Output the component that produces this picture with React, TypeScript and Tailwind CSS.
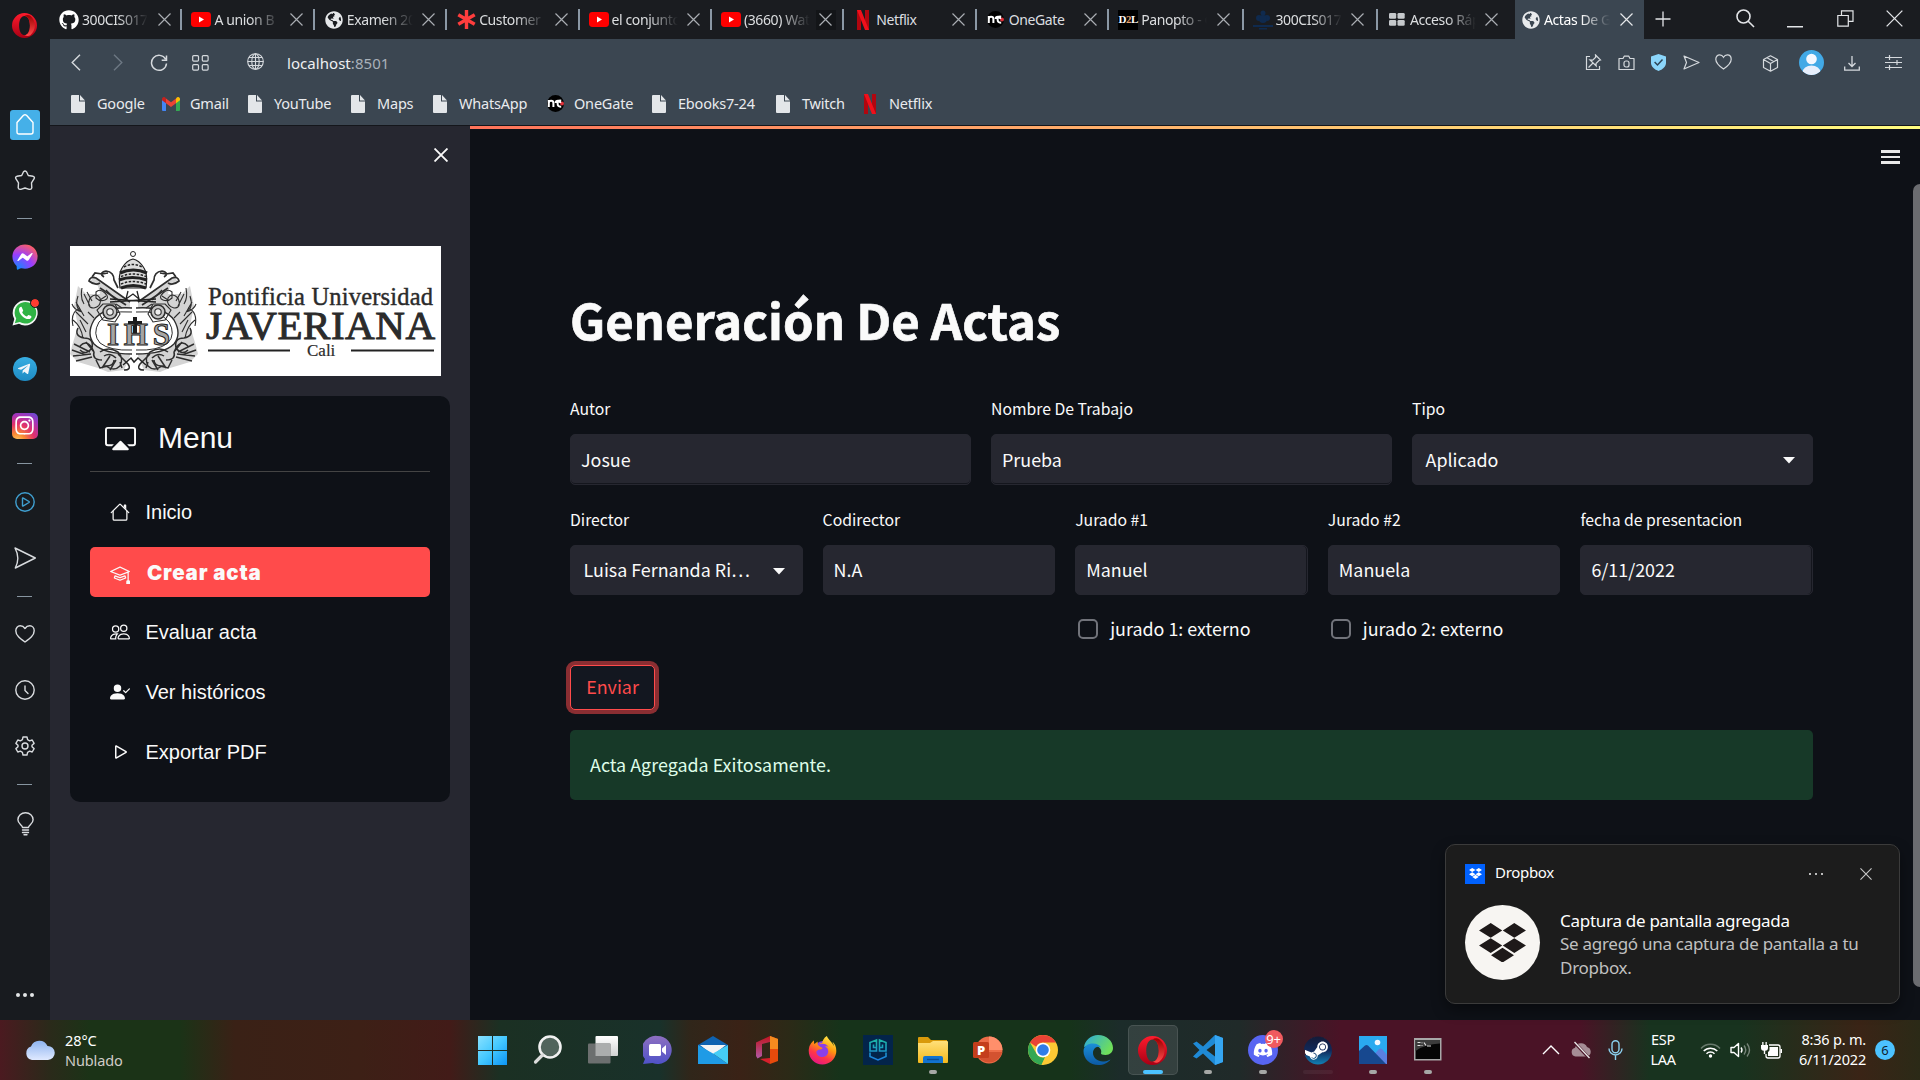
import React from "react";
import { BsCast, BsMortarboard, BsPersonCheckFill, BsPlay } from "react-icons/bs";
import {
  FaDiscord,
  FaFacebookMessenger,
  FaFirefoxBrowser,
  FaGithub,
  FaGlobeAmericas,
  FaInstagram,
  FaSteam,
  FaTelegramPlane,
} from "react-icons/fa";

const UI = "font-['Noto_Sans','Open_Sans',sans-serif]";
const ST = "font-['Noto_Sans_CJK_SC','Noto_Sans_CJK_JP',sans-serif]";

/* ---------- small glyphs ---------- */

function Cross({ size = 13, color = "#a9adb2", w = 1.2 }: { size?: number; color?: string; w?: number }) {
  return (
    <svg width={size} height={size} viewBox="0 0 13 13" fill="none" stroke={color} strokeWidth={w}>
      <path d="M.5.5l12 12M12.5.5l-12 12" />
    </svg>
  );
}

function YouTube() {
  return (
    <svg width="20" height="15" viewBox="0 0 20 15">
      <rect width="20" height="15" rx="3.4" fill="#f00" />
      <path d="M8 4.4l5 3.1-5 3.1z" fill="#fff" />
    </svg>
  );
}

function Globe({ color = "#e6e8ea" }: { color?: string }) {
  return <FaGlobeAmericas size={18} color={color} />;
}

function NetflixN({ w = 12, h = 20 }: { w?: number; h?: number }) {
  return (
    <svg width={w} height={h} viewBox="0 0 12 20">
      <path d="M0 0h4v20H0zM8 0h4v20H8z" fill="#b1060f" />
      <path d="M0 0h4l8 20H8z" fill="#f0101b" />
    </svg>
  );
}

function OneGate() {
  return (
    <svg width="17" height="17" viewBox="0 0 17 17">
      <circle cx="8.500" cy="8.500" r="8.500" fill="#000" />
      <circle cx="15" cy="8.500" r="2" fill="#e0323c" />
      <path d="M1.800 12V5M1.800 8q0-2.300 2.300-2.300T6.400 8v4M8.700 8q0-2.300 2.300-2.300T13.300 8M14.200 5.700q-3.600-.6-3.600 2.900t3.600 3" fill="none" stroke="#fff" strokeWidth="2" />
    </svg>
  );
}

function FileIcon() {
  return (
    <svg width="14" height="18" viewBox="0 0 14 18" fill="#e3e6e9">
      <path d="M1 0h7v6.5h6V17a1 1 0 0 1-1 1H1a1 1 0 0 1-1-1V1a1 1 0 0 1 1-1z" />
      <path d="M9 0l5 5.500H9z" />
    </svg>
  );
}

function Gmail() {
  return (
    <svg width="18" height="14" viewBox="0 0 18 14">
      <path d="M0 2.500V13a1 1 0 0 0 1 1h3V5z" fill="#4285f4" />
      <path d="M18 2.500V13a1 1 0 0 1-1 1h-3V5z" fill="#34a853" />
      <path d="M14 1.500V6.200l4-3V2c0-1.700-1.900-2.600-3.200-1.600z" fill="#fbbc04" />
      <path d="M4 6.200V1.500l5 3.800 5-3.800v4.700L9 10z" fill="#ea4335" />
      <path d="M0 2v1.200l4 3V1.500L3.200.4C1.900-.6 0 .3 0 2z" fill="#c5221f" />
    </svg>
  );
}

/* ---------- browser tabs ---------- */

const tabs: { icon: React.ReactNode; label: string; fade?: boolean; dark?: boolean }[] = [
  { icon: <FaGithub size={20} color="#fff" />, label: "300CIS017", fade: true },
  { icon: <YouTube />, label: "A union B", fade: true },
  { icon: <Globe />, label: "Examen 20", fade: true },
  {
    icon: (
      <svg width="19" height="19" viewBox="0 0 19 19" stroke="#ff3d3d" strokeWidth="3.4">
        <path d="M9.500 0v19M1.300 4.700l16.400 9.600M17.700 4.700L1.300 14.300" />
      </svg>
    ),
    label: "Customer",
    fade: true,
  },
  { icon: <YouTube />, label: "el conjunto", fade: true },
  { icon: <YouTube />, label: "(3660) Wat", fade: true, dark: true },
  { icon: <NetflixN />, label: "Netflix" },
  { icon: <OneGate />, label: "OneGate" },
  {
    icon: (
      <div className="flex h-5 w-5 items-center justify-center bg-black font-['Liberation_Serif',serif] text-[11px] leading-none font-bold tracking-[-0.6px] text-white">
        D<span className="text-[#e8a26b]">2</span>L
      </div>
    ),
    label: "Panopto - C",
    fade: true,
  },
  {
    icon: (
      <svg width="20" height="20" viewBox="0 0 20 20" fill="#0f2a4e">
        <circle cx="10" cy="3" r="2.500" />
        <circle cx="6" cy="8" r="3" />
        <circle cx="14" cy="8" r="3" />
        <circle cx="10" cy="9" r="4" />
        <path d="M0 15h20v2H0zM6 18h8v1.500H6z" />
      </svg>
    ),
    label: "300CIS017",
    fade: true,
  },
  {
    icon: (
      <svg width="16" height="13" viewBox="0 0 16 13" fill="#c6c9cc">
        <rect width="7.200" height="5.800" rx="1.300" />
        <rect x="8.500" width="7.200" height="5.800" rx="1.300" />
        <rect y="7" width="7.200" height="5.800" rx="1.300" />
        <rect x="8.500" y="7" width="7.200" height="5.800" rx="1.300" />
      </svg>
    ),
    label: "Acceso Ráp",
    fade: true,
  },
];

function TabBody({ icon, label, fade, active }: { icon: React.ReactNode; label: string; fade?: boolean; active?: boolean }) {
  return (
    <>
      <div className="flex w-5 shrink-0 items-center justify-center">{icon}</div>
      <div
        className={`ml-[3px] w-[66px] shrink-0 overflow-hidden text-[14px] leading-5 tracking-[-0.4px] whitespace-nowrap ${
          active ? "text-white" : "text-[#dcdee0]"
        } ${fade ? "[mask-image:linear-gradient(90deg,#000_55%,transparent_100%)]" : ""}`}
      >
        {label}
      </div>
    </>
  );
}

function TabStrip() {
  return (
    <div className={`${UI} flex h-[39px] bg-[#1a1c20]`}>
      <div className="flex w-[1465px]">
        {tabs.map((t, i) => (
          <div key={i} className={`flex h-[39px] shrink-0 items-center pl-[9px] ${i < 8 ? "w-[132.4px]" : "w-[134.4px]"}`}>
            <TabBody {...t} />
            <div className={`ml-[6px] flex size-5 items-center justify-center ${t.dark ? "bg-[#131518]" : ""}`}>
              <Cross />
            </div>
            {i < 10 && <div className="ml-auto h-[21px] w-[2px] bg-[#8b98a5]" />}
          </div>
        ))}
      </div>
      <div className="flex h-[39px] w-[129px] items-center bg-[#3b4651] pl-[6px]">
        <TabBody icon={<Globe color="#e8eaec" />} label="Actas De G" fade active />
        <div className="ml-[6px] flex size-5 items-center justify-center">
          <Cross color="#e6e8ea" />
        </div>
      </div>
      <div className="flex h-[37px] flex-1 items-center text-[#e3e5e8]">
        <svg className="ml-[11px]" width="16" height="16" viewBox="0 0 16 16" fill="none" stroke="currentColor" strokeWidth="1.300">
          <path d="M8 .5v15M.5 8h15" />
        </svg>
        <svg className="ml-[65px]" width="19" height="19" viewBox="0 0 19 19" fill="none" stroke="currentColor" strokeWidth="1.600">
          <circle cx="7.500" cy="7.500" r="6.500" />
          <path d="M12.200 12.200l5.800 5.800" />
        </svg>
        <svg className="mt-4 ml-[32px]" width="16" height="2" viewBox="0 0 16 2" fill="currentColor">
          <path d="M0 0h16v1.500H0z" />
        </svg>
        <svg className="ml-[34px]" width="17" height="17" viewBox="0 0 17 17" fill="none" stroke="currentColor" strokeWidth="1.200">
          <path d="M.8 5.500h10.500v10.700H.8zM4.500 5.500V.8H16v10.500h-4.700" />
        </svg>
        <div className="ml-[32px]">
          <Cross size={17} color="#e3e5e8" w={1} />
        </div>
      </div>
    </div>
  );
}

/* ---------- address bar ---------- */

function AddressBar() {
  return (
    <div className={`${UI} flex h-[47px] items-center text-[#d5d9dd]`}>
      <svg className="ml-[21px]" width="10" height="17" viewBox="0 0 10 17" fill="none" stroke="#d5d9dd" strokeWidth="1.400">
        <path d="M9 .8L1.200 8.500 9 16.200" />
      </svg>
      <svg className="ml-[32px]" width="10" height="17" viewBox="0 0 10 17" fill="none" stroke="#6d7883" strokeWidth="1.400">
        <path d="M1 .8l7.800 7.700L1 16.200" />
      </svg>
      <svg className="ml-[27px]" width="18" height="18" viewBox="0 0 18 18" fill="none" stroke="currentColor" strokeWidth="1.500">
        <path d="M15.600 5.200A7.500 7.500 0 1 0 16.500 9.500M16.500 1.500v4.800h-4.800" />
      </svg>
      <svg className="ml-[24px]" width="17" height="16" viewBox="0 0 17 16" fill="none" stroke="currentColor" strokeWidth="1.200">
        <rect x=".7" y=".7" width="5.800" height="5.400" rx="1" />
        <rect x="10.300" y=".7" width="5.800" height="5.400" rx="1" />
        <rect x=".7" y="9.700" width="5.800" height="5.400" rx="1" />
        <rect x="10.300" y="9.700" width="5.800" height="5.400" rx="1" />
      </svg>
      <svg className="mb-[2px] ml-[38px]" width="17" height="17" viewBox="0 0 17 17" fill="none" stroke="currentColor" strokeWidth="1.100">
        <circle cx="8.500" cy="8.500" r="7.800" />
        <ellipse cx="8.500" cy="8.500" rx="3.700" ry="7.800" />
        <path d="M8.500.7v15.600M.7 8.500h15.600M2 4.500h13M2 12.500h13" />
      </svg>
      <div className="ml-[23px] text-[15px] leading-5 tracking-[0.05px] text-[#eef0f2]">
        localhost<span className="text-[#a9b1b9]">:8501</span>
      </div>
      <div className="ml-auto flex items-center">
        <svg width="17" height="17" viewBox="0 0 17 17" fill="none" stroke="currentColor" strokeWidth="1.200">
          <path d="M5 2.500H1.500v13h13V12M10.500 1l5 5-1.500.5-3 3 .2 2.500L5 6l2.700.2 3-3zM8 9l-4.500 4.500" />
        </svg>
        <svg className="ml-4" width="17" height="16" viewBox="0 0 17 16" fill="none" stroke="currentColor" strokeWidth="1.200">
          <path d="M1 3.500h4l1.200-2.300h4.600L12 3.500h4v11H1z" strokeLinejoin="round" />
          <rect x="6" y="6" width="5" height="6" rx="2" />
        </svg>
        <svg className="ml-4" width="15" height="17" viewBox="0 0 15 17">
          <path d="M7.500 0L15 2.600v6.200c0 4-3.500 6.800-7.500 8.200C3.500 15.600 0 12.800 0 8.800V2.600z" fill="#8bd6fb" />
          <path d="M3.600 8l2.900 3 5-5.500" fill="none" stroke="#2d4456" strokeWidth="1.500" />
        </svg>
        <svg className="ml-[17px]" width="17" height="15" viewBox="0 0 17 15" fill="none" stroke="currentColor" strokeWidth="1.200">
          <path d="M1 1l15 6.500L1 14l2.500-6.500z" strokeLinejoin="round" />
        </svg>
        <svg className="mb-[2px] ml-[15px]" width="17" height="16" viewBox="0 0 17 16" fill="none" stroke="currentColor" strokeWidth="1.200">
          <path d="M8.500 15C4 12 .8 9 .8 5.300.8 2.500 2.600.8 4.700.8c1.700 0 3 1 3.800 2.400C9.300 1.800 10.600.8 12.300.8c2.100 0 3.900 1.700 3.900 4.500 0 3.700-3.200 6.700-7.700 9.700z" />
        </svg>
        <svg className="mt-[2px] ml-[30px]" width="17" height="17" viewBox="0 0 17 17" fill="none" stroke="currentColor" strokeWidth="1.200" strokeLinejoin="round">
          <path d="M8.500.8l7 3.700v8l-7 3.700-7-3.700v-8zM1.500 4.500l7 4 7-4M8.500 8.500v7.700M5 2.700l7 4" />
        </svg>
        <svg className="ml-[20px]" width="25" height="25" viewBox="0 0 25 25">
          <defs>
            <clipPath id="avatar">
              <circle cx="12.500" cy="12.500" r="12.500" />
            </clipPath>
          </defs>
          <g clipPath="url(#avatar)">
            <path d="M0 0h25v25H0z" fill="#42a9e6" />
            <circle cx="12.500" cy="9" r="5.300" fill="#f5f8ff" />
            <ellipse cx="12.500" cy="22.500" rx="9" ry="7" fill="#e8effc" />
          </g>
        </svg>
        <svg className="mt-[2px] ml-[20px]" width="16" height="15" viewBox="0 0 16 15" fill="none" stroke="currentColor" strokeWidth="1.300">
          <path d="M8 0v10.500M4.500 7L8 10.500 11.500 7M.7 10.500v3.700h14.600v-3.700" />
        </svg>
        <svg className="mr-[18px] ml-[25px]" width="17" height="15" viewBox="0 0 17 15" fill="none" stroke="currentColor" strokeWidth="1.200">
          <path d="M0 2.500h17M0 7.500h17M0 12.500h17M4.500 0v5M12 5v5M4.500 10v5" />
        </svg>
      </div>
    </div>
  );
}

function Bookmarks() {
  return (
    <div className={`${UI} flex h-[37px] items-center pb-[2px] pl-[18px] text-[14.5px] tracking-[-0.2px] text-[#e9ebee]`}>
      <Bookmark w="w-[93px]" icon={<FileIcon />} label="Google" />
      <Bookmark w="w-[84px]" icon={<Gmail />} label="Gmail" />
      <Bookmark w="w-[103px]" icon={<FileIcon />} label="YouTube" />
      <Bookmark w="w-[82px]" icon={<FileIcon />} label="Maps" />
      <Bookmark w="w-[115px]" icon={<FileIcon />} label="WhatsApp" />
      <Bookmark w="w-[104px]" icon={<OneGate />} label="OneGate" />
      <Bookmark w="w-[124px]" icon={<FileIcon />} label="Ebooks7-24" />
      <Bookmark w="w-[87px]" icon={<FileIcon />} label="Twitch" />
      <Bookmark w="w-[100px]" icon={<NetflixN />} label="Netflix" />
    </div>
  );
}

function Bookmark({ w, icon, label }: { w: string; icon: React.ReactNode; label: string }) {
  return (
    <div className={`flex items-center gap-[9px] whitespace-nowrap ${w}`}>
      <div className="flex w-5 shrink-0 justify-center">{icon}</div>
      {label}
    </div>
  );
}

/* ---------- Opera side rail ---------- */

function OperaLogo({ size }: { size: number }) {
  return (
    <svg width={size} height={size} viewBox="0 0 30 30">
      <defs>
        <linearGradient id="opA" x1="0" y1="0" x2="0" y2="1">
          <stop offset="0" stopColor="#ff1b2d" />
          <stop offset="1" stopColor="#a70014" />
        </linearGradient>
        <linearGradient id="opB" x1="0" y1="0" x2="0" y2="1">
          <stop offset="0" stopColor="#9c0000" />
          <stop offset="1" stopColor="#ff4b4b" />
        </linearGradient>
      </defs>
      <path fillRule="evenodd" d="M15 0a15 15 0 1 0 0 30 15 15 0 0 0 0-30zm0 3.500c4.200 0 6.500 5.300 6.500 11.500S19.200 26.500 15 26.500 8.500 21.200 8.500 15 10.800 3.500 15 3.500z" fill="url(#opA)" />
      <path d="M15 3.500c2-1.300 5-1.500 7-.1A15 15 0 0 1 22 26.600c-2 1.400-5 1.200-7-.1 4.200 0 6.500-5.300 6.500-11.500S19.200 3.500 15 3.500z" fill="url(#opB)" />
    </svg>
  );
}

const Cell = ({ children }: { children: React.ReactNode }) => (
  <div className="flex h-[56.2px] shrink-0 items-center justify-center">{children}</div>
);
const Dash = () => (
  <div className="flex h-5 shrink-0 items-center justify-center">
    <div className="h-px w-[15px] bg-[#8795a0]" />
  </div>
);
const Line = ({ d, w = 20, h = 20, color = "#d9dcdf", children }: { d?: string; w?: number; h?: number; color?: string; children?: React.ReactNode }) => (
  <svg width={w} height={h} viewBox={`0 0 ${w} ${h}`} fill="none" stroke={color} strokeWidth="1.400" strokeLinejoin="round" strokeLinecap="round">
    {d && <path d={d} />}
    {children}
  </svg>
);

function SideRail() {
  return (
    <div className="flex w-[50px] shrink-0 flex-col bg-[#181b1f] pr-px">
      <div className="flex h-[96.500px] justify-center pt-[13px]">
        <OperaLogo size={25} />
      </div>
      <Cell>
        <div className="ml-px flex size-[30px] items-center justify-center rounded-[3px] bg-[#45b0e8]">
          <Line w={18} h={21} color="#fff" d="M1 8.500L7.500 1.300q1.500-1.100 3 0L17 8.500V18q0 2-2 2H3q-2 0-2-2z" />
        </div>
      </Cell>
      <Cell>
        <Line w={22} h={21} d="M9.500 1.700q1.500-1.300 3 0l1.800 3.800 4.800.8q2 .8.900 2.500l-2.500 4 .3 5q-.5 2-2.600 1.500L11 18l-4.200 1.300q-2.100.5-2.600-1.500l.3-5-2.500-4Q.9 7.100 2.900 6.300l4.800-.8z" />
      </Cell>
      <Dash />
      <Cell>
        <svg width="0" height="0">
          <defs>
            <radialGradient id="msg" cx=".2" cy="1" r="1.100">
              <stop offset="0" stopColor="#0a8dff" />
              <stop offset=".55" stopColor="#9a3dff" />
              <stop offset="1" stopColor="#ff6060" />
            </radialGradient>
            <linearGradient id="ff" x1="0.800" y1="0" x2=".3" y2="1">
              <stop offset="0" stopColor="#fff44f" />
              <stop offset=".4" stopColor="#ff980e" />
              <stop offset=".7" stopColor="#ff3647" />
              <stop offset="1" stopColor="#e31587" />
            </linearGradient>
            <linearGradient id="steam" x1="0" y1="0" x2="0" y2="1">
              <stop offset="0" stopColor="#141b38" />
              <stop offset=".5" stopColor="#10295a" />
              <stop offset="1" stopColor="#1180b5" />
            </linearGradient>
          </defs>
        </svg>
        <div className="flex size-[26px] items-center justify-center rounded-full bg-[radial-gradient(circle,#fff_55%,transparent_56%)]">
          <FaFacebookMessenger size={26} fill="url(#msg)" />
        </div>
      </Cell>
      <Cell>
        <div className="relative">
          <svg width="26" height="26" viewBox="0 0 26 26">
            <path d="M.5 25.500l1.800-6.400A12.500 12.500 0 1 1 7 23.800z" fill="#f4f6f5" />
            <path d="M2.800 23.200l1.400-4.800A10.800 10.800 0 1 1 7.800 22z" fill="#2fb344" />
            <path d="M9.600 7c-.6-.7-2.600.4-2.600 2.400 0 4.500 5 9.600 9.400 9.700 2 0 3.300-1.500 3-2.700-.1-.4-2.500-1.600-3-1.500-.6.100-1 1.500-1.600 1.500-1.300-.2-4.300-2.700-4.600-4.200 0-.5 1.100-1.200 1-1.800z" fill="#fff" />
          </svg>
          <div className="absolute -top-px -right-px size-2 rounded-full bg-[#ff3b30] outline outline-1 outline-[#181b1f]" />
        </div>
      </Cell>
      <Cell>
        <div className="flex size-6 items-center justify-center rounded-full bg-gradient-to-b from-[#37aee2] to-[#1e8bc3]">
          <FaTelegramPlane size={14} color="#f2f6fa" className="mr-[2px]" />
        </div>
      </Cell>
      <Cell>
        <div className="flex size-[26px] items-center justify-center rounded-[5px] bg-[radial-gradient(circle_at_20%_110%,#ffd36b_0%,#fb8d33_22%,#e1306c_50%,#a634b8_75%,#5851db_100%)]">
          <FaInstagram size={21} color="#fff" />
        </div>
      </Cell>
      <Dash />
      <Cell>
        <Line color="#3f9fd0" d="M7.500 6.500q0-.8.800-.4l5.700 3.400q.6.500 0 1l-5.700 3.400q-.8.400-.8-.4z">
          <circle cx="10" cy="10" r="9.200" />
        </Line>
      </Cell>
      <Cell>
        <Line w={22} h={22} d="M1 1l20.300 10L1.300 21Q6.500 11 1 1z" />
      </Cell>
      <Dash />
      <Cell>
        <Line w={20} h={18} d="M10 17C5 13.500.8 10.500.8 5.800.8 3 2.700.8 5.200.8 7.300.8 9 2 10 3.500 11 2 12.700.8 14.800.8c2.500 0 4.400 2.200 4.400 5C19.200 10.500 15 13.500 10 17z" />
      </Cell>
      <Cell>
        <Line d="M10 6v4.500l3 3">
          <circle cx="10" cy="10" r="9.200" />
        </Line>
      </Cell>
      <Cell>
        <Line d="M8 1h4l.6 2.700 2 1.100 2.600-.8 1.900 3.400L17 9.200v1.600l2.100 1.800-1.900 3.400-2.600-.8-2 1.100L12 19H8l-.6-2.700-2-1.100-2.600.8L.9 12.600 3 10.800V9.200L.9 7.400 2.800 4l2.600.8 2-1.100z">
          <circle cx="10" cy="10" r="3" />
        </Line>
      </Cell>
      <Dash />
      <Cell>
        <div className="mt-[3px] ml-px">
          <Line w={17} h={24} d="M5.500 15.500C5.500 13 .9 12 .9 7.800a7.600 7 0 0 1 15.200 0c0 4.200-4.600 5.200-4.600 7.700zM5.500 18h6M5.500 20.500h6M7 22.800h3" />
        </div>
      </Cell>
      <div className="mt-auto flex justify-center gap-[3px] pb-[23px]">
        <div className="size-1 rounded-full bg-[#e3e5e7]" />
        <div className="size-1 rounded-full bg-[#e3e5e7]" />
        <div className="size-1 rounded-full bg-[#e3e5e7]" />
      </div>
    </div>
  );
}

/* ---------- university logo ---------- */

function CrestHalf() {
  return (
    <g fill="none" stroke="#2e2e2e" strokeWidth="1.100">
      <path d="M60 56L24 30l-4 6 8 4 2 8-14 0-8-8-4 20 4 20-6 20-2 8 8 8 20 6 10 4 16-2 6-14z" fill="#d4d4d4" stroke="none" />
      <path d="M62 62Q34 60 24 74 16 88 24 98 34 108 62 108" fill="#fff" strokeWidth="1.400" />
      <path d="M62 66Q38 64 29 76 22 88 30 97 40 105 62 104" strokeWidth="1" />
      <path d="M60 56L26 32q-6-2-7 3 6 5 11 2M56 59L30 42M34 31q-6-4 2-6 8 1 8 9l4 8M22 31l3-4 7 1 6-1" strokeWidth="1.700" />
      <path d="M12 42q-2 10 2 16M8 50q-4 12 4 16-8-2-10-8M10 62q-10 4-7 18M14 48l6 12M17 46l5 9M6 56l8 14M3 74q8 6 10 18M6 66l12 12M10 74l6 12M20 52q6-6 10 0 2 8-6 10-8 0-4-10z" />
      <circle cx="40" cy="66" r="7" strokeWidth="1.600" fill="#c4c4c4" />
      <circle cx="40" cy="66" r="3.200" fill="#eee" />
      <path d="M33 58l-6 6 6 10 12 2 5-8-5-10zM26 46q4-4 9 1t0 7-9-2zM36 44l10 10M30 54l6-4M46 58l6 4M18 66l6 6" />
      <path d="M8 82q-4 8 6 10 10 0 8 10-6 8-12 2M2 104l14 5M4 98l16 8M3 110l18-2M6 115l16-4M10 100q8-8 14 6-2 8 8 8M16 96l8 10" strokeWidth="1.500" />
      <path d="M30 106q8-6 18 0 6 6 2 14-6 6-14 0 8 0 8-6M34 110q6-4 12 2M26 114l4 8 8-2M32 122l8-12M48 108l10 10q4 6-4 6M40 124l6-10M50 116l2 6" strokeWidth="1.500" />
    </g>
  );
}

function UniversityLogo() {
  return (
    <svg className="block h-[130px] w-[371px] bg-white" viewBox="0 0 371 130">
      <CrestHalf />
      <g transform="translate(128 0) scale(-1 1)">
        <CrestHalf />
      </g>
      <g fill="none" stroke="#222">
        <circle cx="63" cy="8" r="2.500" />
        <path d="M50 42q-2-14 2-20 5-8 11-9 6 1 11 9 4 6 2 20z" fill="#ddd" strokeWidth="1.200" />
        <path d="M50 27q13-6 27 0M49 34q13-5 28 0M51 42q12-5 25 0" strokeWidth="3.200" />
        <path d="M51 30.500q12-5 25 0M51 38q12-5 25 0M54 21q9-5 18 0" strokeWidth="1.500" strokeDasharray="2.500 1.500" />
        <path d="M58 45l-2 8 7-5 6 5-2-8M40 56l46-3M40 53l46 3" strokeWidth="1.300" />
        <path d="M53 119l8-7 3 4 4-4 8 7" strokeWidth="1.500" />
      </g>
      <path d="M63 71h4v4h5v4h-5v9h-4v-9h-5v-4h5z" fill="#1c1c1c" />
      <text x="37" y="99" fontFamily="Liberation Serif, serif" fontSize="31" fontWeight="700" fill="#a5a5a5" stroke="#222" strokeWidth="1" textLength="63">
        IHS
      </text>
      <g fontFamily="Liberation Serif, serif" fill="#2b2b2b">
        <text x="138" y="58.500" fontSize="24.500" textLength="225" stroke="#2b2b2b" strokeWidth=".4">
          Pontificia Universidad
        </text>
        <text x="136" y="93" fontSize="41" textLength="229" stroke="#2b2b2b" strokeWidth="1">
          JAVERIANA
        </text>
        <text x="237" y="109.500" fontSize="17" stroke="#2b2b2b" strokeWidth=".2">
          Cali
        </text>
      </g>
      <path d="M138 104.500h82M281 104.500h83" stroke="#222" strokeWidth="2" />
    </svg>
  );
}

/* ---------- Streamlit sidebar ---------- */

const House = () => (
  <svg width="20" height="20" viewBox="0 0 16 16" fill="currentColor">
    <path d="M2 13.500V7h1v6.500a.5.500 0 0 0 .5.500h9a.5.500 0 0 0 .5-.5V7h1v6.500a1.500 1.500 0 0 1-1.500 1.500h-9A1.500 1.500 0 0 1 2 13.500zm11-11V6l-2-2V2.500a.5.500 0 0 1 .5-.5h1a.5.500 0 0 1 .5.500z" />
    <path d="M7.293 1.500a1 1 0 0 1 1.414 0l6.647 6.646a.5.500 0 0 1-.708.708L8 2.207 1.354 8.854a.5.500 0 1 1-.708-.708L7.293 1.500z" />
  </svg>
);
const People = () => (
  <svg width="20" height="20" viewBox="0 0 16 16" fill="currentColor">
    <path d="M15 14s1 0 1-1-1-4-5-4-5 3-5 4 1 1 1 1h8zm-7.978-1A.261.261 0 0 1 7 12.996c.001-.264.167-1.030.760-1.720C8.312 10.629 9.282 10 11 10c1.717 0 2.687.630 3.240 1.276.593.690.758 1.457.760 1.720l-.008.002a.274.274 0 0 1-.014.002H7.022zM11 7a2 2 0 1 0 0-4 2 2 0 0 0 0 4zm3-2a3 3 0 1 1-6 0 3 3 0 0 1 6 0zM6.936 9.280a5.880 5.880 0 0 0-1.230-.247A7.350 7.350 0 0 0 5 9c-4 0-5 3-5 4 0 .667.333 1 1 1h4.216A2.238 2.238 0 0 1 5 13c0-1.010.377-2.042 1.090-2.904.243-.294.526-.569.846-.816zM4.920 10A5.493 5.493 0 0 0 4 13H1c0-.260.164-1.030.760-1.724.545-.636 1.492-1.256 3.160-1.275zM1.500 5.500a3 3 0 1 1 6 0 3 3 0 0 1-6 0zm3-2a2 2 0 1 0 0 4 2 2 0 0 0 0-4z" />
  </svg>
);

function MenuItem({ icon, label, active }: { icon: React.ReactNode; label: string; active?: boolean }) {
  return (
    <div className={`mb-[10px] flex h-[50px] items-center rounded-[5px] pl-5 ${active ? "bg-[#ff4b4b]" : ""}`}>
      <div className={active ? "mt-[3px] w-[37px]" : "w-9"}>{icon}</div>
      {active ? (
        <span className="mt-[2px] font-['Inter',sans-serif] text-[20.5px] font-black tracking-[0.8px]">{label}</span>
      ) : (
        <span className="-ml-[0.5px] text-xl">{label}</span>
      )}
    </div>
  );
}

function Sidebar() {
  return (
    <div className="flex w-[420px] shrink-0 flex-col bg-[#262730] px-5">
      <div className="flex h-[120px] justify-end pt-[22px] pr-[2px]">
        <Cross size={14} color="#fafafa" w={1.7} />
      </div>
      <UniversityLogo />
      <div className="mt-5 h-[406px] rounded-[10px] bg-[#0e1117] px-5 font-['Liberation_Sans',Arial,sans-serif] text-[#fafafa]">
        <div className="mb-[15px] flex h-[76px] items-center border-b border-[#444] pl-[15px]">
          <BsCast size={31} className="mt-[9px]" />
          <span className="mt-[9px] ml-[22px] text-[30px] leading-9">Menu</span>
        </div>
        <MenuItem icon={<House />} label="Inicio" />
        <MenuItem icon={<BsMortarboard size={20} />} label="Crear acta" active />
        <MenuItem icon={<People />} label="Evaluar acta" />
        <MenuItem icon={<BsPersonCheckFill size={20} />} label="Ver históricos" />
        <MenuItem icon={<BsPlay size={24} className="-ml-px" />} label="Exportar PDF" />
      </div>
    </div>
  );
}

/* ---------- form ---------- */

function Field({ label, value, select, edge = "", tall }: { label: string; value: string; select?: boolean; edge?: string; tall?: boolean }) {
  return (
    <div className="min-w-0 flex-1">
      <div className="h-[35px] text-[15.75px] leading-5 whitespace-nowrap">{label}</div>
      <div
        className={`flex items-center rounded-[5px] border border-[#262730] bg-[#262730] text-[17.9px] leading-6 whitespace-nowrap ${
          tall ? "h-[51px]" : "h-[50px]"
        } ${select ? "pr-[17px] pl-[12.5px]" : "pl-[10px]"} ${edge}`}
      >
        <span className="-mt-[2px]">{value}</span>
        {select && (
          <svg className="mt-[2px] ml-auto" width="12" height="7" viewBox="0 0 12 7" fill="#fafafa">
            <path d="M0 0h12L6 6.500z" />
          </svg>
        )}
      </div>
    </div>
  );
}

function Check({ label }: { label: string }) {
  return (
    <div className="min-w-0 flex-1">
      <div className="flex items-center pt-[3px] pl-[3px]">
        <div className="size-5 shrink-0 rounded-[5px] border-2 border-[#71737a]" />
        <span className="-mt-[2px] ml-3 text-[17.9px] leading-6 whitespace-nowrap">{label}</span>
      </div>
    </div>
  );
}

function Main() {
  const bottom = "shadow-[inset_0_-1px_0_#14161d]";
  const right = "shadow-[inset_-1px_0_0_#14161d]";
  return (
    <div className={`${ST} relative flex min-w-0 flex-1 flex-col bg-[#0e1117] text-[#fafafa]`}>
      <div className="h-[3px] bg-[linear-gradient(90deg,#ff735a,#fffd80)]" />
      <div className="flex h-[145px] flex-col items-end gap-[3px] pt-[21px] pr-5">
        <div className="h-[2.500px] w-[19px] bg-[#e8e8e8]" />
        <div className="h-[2.500px] w-[19px] bg-[#e8e8e8]" />
        <div className="h-[2.500px] w-[19px] bg-[#e8e8e8]" />
      </div>
      <div className="w-[1343px] pl-[100px]">
        <h1 className="h-[125px] pt-[12px] text-[49px] leading-[66px] font-bold whitespace-nowrap [-webkit-text-stroke:0.700px_#fafafa]">Generación De Actas</h1>
        <div className="flex h-[111px] gap-5">
          <Field tall label="Autor" value="Josue" edge={bottom} />
          <Field tall label="Nombre De Trabajo" value="Prueba" edge={bottom} />
          <Field tall label="Tipo" value="Aplicado" select />
        </div>
        <div className="flex h-[105px] gap-5">
          <Field label="Director" value="Luisa Fernanda Ri…" select />
          <Field label="Codirector" value="N.A" />
          <Field label="Jurado #1" value="Manuel" edge={right} />
          <Field label="Jurado #2" value="Manuela" />
          <Field label="fecha de presentacion" value="6/11/2022" edge={right} />
        </div>
        <div className="flex h-[30px] gap-5">
          <div className="flex-1" />
          <div className="flex-1" />
          <Check label="jurado 1: externo" />
          <Check label="jurado 2: externo" />
          <div className="flex-1" />
        </div>
        <div className="mt-5 flex h-[45px] w-[85px] items-center justify-center rounded-[5px] border border-[#ff4b4b] bg-[#131720] pb-[2px] text-[17.9px] text-[#ff4b4b] shadow-[0_0_0_4px_#8a2e32]">
          Enviar
        </div>
        <div className="mt-5 flex h-[70px] items-center rounded-[5px] bg-[#173928] pb-[2px] pl-5 text-[17.9px] text-[#dffde9]">Acta Agregada Exitosamente.</div>
      </div>
      <div className="absolute top-[58px] right-0 h-[803px] w-[7px] rounded-l-full bg-[#6b6c70]" />
    </div>
  );
}

/* ---------- Dropbox notification ---------- */

const Boxes = ({ w, color }: { w: number; color: string }) => (
  <svg width={w} height={w * 0.85} viewBox="0 0 47 40" fill={color}>
    <path d="M11.700 0l11.500 7.400-11.500 7.400L0 7.400zM35.300 0L47 7.400l-11.700 7.400-11.500-7.400zM11.700 15.200l11.500 7.400L11.700 30 0 22.600zM35.300 15.200L47 22.600 35.300 30l-11.500-7.400zM23.500 24.800L35 32.200 23.500 39.600 12 32.200z" />
  </svg>
);

function Notification() {
  return (
    <div className={`${UI} absolute top-[844px] left-[1445px] h-[160px] w-[455px] rounded-[10px] border border-[#3b3b3b] bg-[#1c1c1c] px-[19px] text-white shadow-[0_6px_14px_rgba(0,0,0,0.4)]`}>
      <div className="flex h-[57px] items-center">
        <div className="flex size-5 items-center justify-center bg-[#0061fe]">
          <Boxes w={13} color="#fff" />
        </div>
        <span className="-mt-[2px] ml-[10px] text-[15px] tracking-[-0.3px]">Dropbox</span>
        <div className="ml-auto flex gap-[4px]">
          <div className="size-[2px] bg-[#bbb]" />
          <div className="size-[2px] bg-[#bbb]" />
          <div className="size-[2px] bg-[#bbb]" />
        </div>
        <div className="mr-[8px] ml-[37px]">
          <Cross size={12} color="#c8c8c8" />
        </div>
      </div>
      <div className="mt-[3px] flex">
        <div className="flex size-[75px] items-center justify-center rounded-full bg-[#f7f5f2]">
          <Boxes w={47} color="#1e1919" />
        </div>
        <div className="mt-[4px] ml-5 text-[17px] leading-[23.300px] tracking-[-0.28px] whitespace-nowrap">
          <div>Captura de pantalla agregada</div>
          <div className="text-[#c0c0c0]">Se agregó una captura de pantalla a tu</div>
          <div className="text-[#c0c0c0]">Dropbox.</div>
        </div>
      </div>
    </div>
  );
}

/* ---------- taskbar ---------- */

const Grad = ({ id, a, b, x2 = 0, y2 = 1 }: { id: string; a: string; b: string; x2?: number; y2?: number }) => (
  <linearGradient id={id} x1="0" y1="0" x2={x2} y2={y2}>
    <stop offset="0" stopColor={a} />
    <stop offset="1" stopColor={b} />
  </linearGradient>
);

const I = ({ children }: { children: React.ReactNode }) => (
  <svg width="30" height="30" viewBox="0 0 30 30">
    {children}
  </svg>
);

const apps: { el: React.ReactNode; mark?: "on" | "active" | "faint"; badge?: string }[] = [
  {
    el: (
      <I>
        <defs>
          <linearGradient id="win" x1="0" y1="0" x2="30" y2="30" gradientUnits="userSpaceOnUse">
            <stop offset="0" stopColor="#8be2ff" />
            <stop offset=".5" stopColor="#44c8ff" />
            <stop offset="1" stopColor="#0a93f5" />
          </linearGradient>
        </defs>
        <path d="M0 1h14v14H0zM15 1h14v14H15zM0 16h14v14H0zM15 16h14v14H15z" fill="url(#win)" />
      </I>
    ),
  },
  {
    el: (
      <I>
        <circle cx="17" cy="12" r="10.500" fill="#51645c" stroke="#f1f1f1" strokeWidth="2.600" />
        <path d="M9.500 20L2.500 27" stroke="#dcdcdc" strokeWidth="3.200" strokeLinecap="round" />
      </I>
    ),
  },
  {
    el: (
      <I>
        <defs>
          <Grad id="tv" a="#ffffff" b="#cfd1d1" />
        </defs>
        <rect x="7.500" y="1" width="22.500" height="20" rx="1" fill="url(#tv)" />
        <rect y="8.500" width="22.500" height="20" rx="1" fill="#6c6f6f" />
        <path d="M7.500 8.500h15V21h-15z" fill="#abadad" />
      </I>
    ),
  },
  {
    el: (
      <I>
        <defs>
          <Grad id="chat" a="#8d6fc0" b="#4f52c8" />
        </defs>
        <path d="M14.500 1a14 14 0 1 1-5 27L0 29l2-5A14 14 0 0 1 14.500 1z" fill="url(#chat)" />
        <rect x="6" y="9" width="12" height="12" rx="1.500" fill="#fff" />
        <path d="M19 13.500l4-3.500v10l-4-3.500z" fill="#fff" />
      </I>
    ),
  },
  {
    el: (
      <I>
        <path d="M0 10L15 1l15 9v6H0z" fill="#0f62b0" />
        <path d="M2 10h26L15 20z" fill="#f4f4f4" />
        <path d="M0 10v19h30L15 18.500z" fill="#1f9be6" />
        <path d="M30 10v19L15 18.500z" fill="#45cdf6" />
      </I>
    ),
  },
  {
    el: (
      <I>
        <defs>
          <Grad id="off" a="#c0141e" b="#b05aa6" />
        </defs>
        <path d="M17 1v6l-8 2v12l-4.500 2.500L3 21V7.500z" fill="url(#off)" />
        <path d="M17 1l8 3v22l-8 3z" fill="#e84a0c" />
        <path d="M17 1l8 3v10h-8z" fill="#f58a1f" />
        <path d="M7 24l10-1v6z" fill="#d6202c" />
      </I>
    ),
  },
  {
    el: (
      <div className="relative flex size-[30px] items-center justify-center">
        <div className="absolute size-[18px] rounded-full bg-[#8b3fe8]" />
        <FaFirefoxBrowser size={29} fill="url(#ff)" className="relative" />
      </div>
    ),
  },
  {
    el: (
      <I>
        <path d="M0 0h30v30H0z" fill="#03244a" />
        <defs>
          <Grad id="pg" a="#1db5a6" b="#1b7fe0" />
        </defs>
        <path d="M13.500 5L7 7.500V16h6.500zM16.500 5L23 7.500V16h-6.500zM7 17.500v4l8 3.500 8-3.500v-4M10.500 9.500v3h3M19.500 9.500v3h-3" fill="none" stroke="url(#pg)" strokeWidth="1.600" />
      </I>
    ),
  },
  {
    el: (
      <I>
        <defs>
          <Grad id="fold" a="#ffe07a" b="#f5b91c" />
        </defs>
        <path d="M0 3q0-1 1-1h9l3 3h16v8H0z" fill="#d99a0b" />
        <path d="M0 8h12l3-2h14q1 0 1 1v20q0 1-1 1H1q-1 0-1-1z" fill="url(#fold)" />
        <path d="M5 28v-5q0-2 2-2h16q2 0 2 2v5z" fill="#1273cf" />
        <path d="M9 24.500h12" stroke="#0c4d94" strokeWidth="1.400" />
      </I>
    ),
    mark: "on",
  },
  {
    el: (
      <I>
        <circle cx="16" cy="15" r="13.500" fill="#ed6c47" />
        <path d="M16 1.500A13.500 13.500 0 0 1 29.500 15H16z" fill="#ff8f6b" />
        <path d="M3 17h26.300A13.500 13.500 0 0 1 3 17z" fill="#d35230" />
        <rect y="7" width="16" height="16" rx="1.500" fill="#c43e1c" />
        <text x="4" y="20" fontFamily="Open Sans, sans-serif" fontSize="13" fontWeight="800" fill="#fff">
          P
        </text>
      </I>
    ),
  },
  {
    el: (
      <I>
        <circle cx="15" cy="15" r="15" fill="#fcc934" />
        <path d="M15 0a15 15 0 0 1 13 7.500H15a7.500 7.500 0 0 0-6.800 4.200L2 7.500A15 15 0 0 1 15 0z" fill="#ea4335" />
        <path d="M2 7.500l6.500 11.250A7.500 7.500 0 0 0 17 22.200L13.500 29.900A15 15 0 0 1 2 7.500z" fill="#34a853" />
        <path d="M21.500 18.750L15 30h-1.500l4-8z" fill="#fcc934" />
        <circle cx="15" cy="15" r="7.300" fill="#fff" />
        <circle cx="15" cy="15" r="5.800" fill="#2f7ce8" />
      </I>
    ),
  },
  {
    el: (
      <I>
        <defs>
          <Grad id="edA" a="#2aa8e0" b="#6fdf5a" x2={1} y2={0.5} />
          <Grad id="edB" a="#1b8fd8" b="#0c59a4" />
        </defs>
        <path d="M1 12C2 5 8 0 15 0c8.500 0 15 6 15 13 0 4-3 7-7.500 7-3 0-5-1-4.500-2 1-2-.5-7-6-7-5 0-9 0-11 1z" fill="url(#edA)" />
        <path d="M.5 16C.5 11 5 8.500 10 8.500c4 0 7 2 8 4-4-2-8 1-8 5.500 0 5 5 9 11 8.500 3-.3 5-1.200 6.500-2C25 28 20.500 30 15.500 30 7 30 .5 24 .5 16z" fill="url(#edB)" />
      </I>
    ),
  },
  { el: <OperaLogo size={29} />, mark: "active" },
  {
    el: (
      <I>
        <path d="M22 0l8 3v24l-8 3L10 18.500 3.500 23.500 0 21.500 6.500 15 0 8.500l3.500-2L10 11.500zM22 8.500L13.500 15l8.500 6.500z" fill="#1f8ad6" fillRule="evenodd" />
        <path d="M22 0l8 3v24l-8 3z" fill="#35a6f2" />
      </I>
    ),
    mark: "on",
  },
  {
    el: (
      <div className="flex size-[30px] items-center justify-center rounded-full bg-[#5865f2]">
        <FaDiscord size={20} color="#fff" />
      </div>
    ),
    mark: "on",
    badge: "9+",
  },
  {
    el: (
      <div className="flex size-[28px] items-center justify-center rounded-full bg-[radial-gradient(circle,#fff_65%,transparent_67%)]">
        <FaSteam size={29} fill="url(#steam)" />
      </div>
    ),
    mark: "faint",
  },
  {
    el: (
      <I>
        <path d="M1 1h28v28H1z" fill="#2aaaf0" />
        <circle cx="19.500" cy="7.500" r="2.800" fill="#f3f8ff" />
        <path d="M14 22l7-8q1.500-1.200 3 0l5 6v9H14z" fill="#5a7fe0" />
        <path d="M1 16l6-5.500q1.500-1 3 0L28 29H1z" fill="#17488f" />
      </I>
    ),
    mark: "on",
  },
  {
    el: (
      <I>
        <path d="M1 3h27.500v22.500H1z" fill="#a8a8a8" />
        <path d="M2.500 5h24.500v19H2.500z" fill="#050505" />
        <path d="M2.500 5H27v3.500Q12 9 2.500 16z" fill="#3c3c3c" />
        <path d="M4.500 7.500h3M4.500 10.500h3M9 7.500v.8M9 10v.8M11 7.500l2 3M14 11h4" stroke="#e0e0e0" strokeWidth="1.200" />
      </I>
    ),
    mark: "on",
  },
];

function Taskbar() {
  return (
    <div
      className={`${UI} flex h-[60px] bg-[linear-gradient(90deg,#4b1a20_0px,#2a2a1a_50px,#1b3317_90px,#1b3317_180px,#3a2116_235px,#3d2016_360px,#421b18_450px,#1b3023_500px,#19312a_660px,#30261a_690px,#3a2216_740px,#2b2a17_790px,#16331a_840px,#16331a_1070px,#1c2c2a_1120px,#202a29_1240px,#4a1326_1340px,#4a1326_1580px,#18331f_1650px,#18331f_1740px,#3a2416_1860px,#2b2a17_1920px)] text-white`}
    >
      <div className="flex w-[465px] pl-[25px]">
        <svg className="mt-[18px]" width="31" height="23" viewBox="0 0 31 23">
          <defs>
            <Grad id="cloud" a="#8fb4f0" b="#dfe9ff" />
          </defs>
          <path d="M7 22a7 7 0 0 1-1-13.500A9 9 0 0 1 22.500 8 7 7 0 0 1 23 22z" fill="url(#cloud)" />
        </svg>
        <div className="mt-[10px] ml-[9px] text-[14.500px] leading-5 tracking-[-0.1px]">
          <div>28°C</div>
          <div className="text-[#d0ccc8]">Nublado</div>
        </div>
      </div>
      {apps.map((a, i) => (
        <div key={i} className="flex w-[55px] flex-col items-center pt-[5px]">
          <div className={`relative flex h-[50px] w-[50px] flex-col items-center rounded-[5px] pt-[10px] ${a.mark === "active" ? "border border-white/10 bg-white/10 pt-[9px]" : ""}`}>
            <div className="flex h-[30px] items-center">{a.el}</div>
            {a.badge && (
              <div className="absolute top-[5px] right-[5px] flex size-[18px] items-center justify-center rounded-full bg-[#f05a5f] text-[13px] leading-none tracking-[-0.3px]">
                {a.badge}
              </div>
            )}
            {a.mark === "on" && <div className="mt-[5px] h-1 w-2 rounded-full bg-[#a6a8a6]" />}
            {a.mark === "active" && <div className="mt-[5px] h-1 w-5 shrink-0 rounded-full bg-[#4cc2ff]" />}
            {a.mark === "faint" && <div className="mt-[5px] h-1 w-[30px] rounded-full bg-white/5" />}
          </div>
        </div>
      ))}
      <div className="flex flex-1 items-center">
        <svg className="ml-[87px]" width="18" height="10" viewBox="0 0 18 10" fill="none" stroke="#fff" strokeWidth="1.400">
          <path d="M1 9l8-8 8 8" />
        </svg>
        <svg className="ml-[11px]" width="21" height="18" viewBox="0 0 21 18">
          <path d="M4.500 15.500a4.500 4.500 0 0 1-.5-8.800A6.500 6.500 0 0 1 16 6a5 5 0 0 1 .5 9.500z" fill="#a58d95" />
          <path d="M3 1l15 16" stroke="#4a1326" strokeWidth="3" />
          <path d="M3.500 1l15 16" stroke="#e8e8e8" strokeWidth="1.300" />
        </svg>
        <svg className="ml-[16px]" width="15" height="20" viewBox="0 0 15 20" fill="none" stroke="#8bd0ee" strokeWidth="1.400">
          <rect x="4" y=".8" width="7" height="12" rx="3.500" />
          <path d="M1 8.500a6.500 6.500 0 0 0 13 0M7.500 15.500V20" />
        </svg>
        <div className="-mt-[2px] ml-[19px] w-[42px] text-center text-[14.500px] leading-5 tracking-[-0.3px]">
          ESP
          <br />
          LAA
        </div>
        <svg className="ml-[16px]" width="21" height="16" viewBox="0 0 21 16" fill="none" stroke="#fff" strokeWidth="1.500">
          <path d="M1 6.500a13 13 0 0 1 19 0" stroke="#fff" strokeOpacity=".35" />
          <path d="M3.700 9a9.500 9.500 0 0 1 13.600 0M6.500 11.700a5.700 5.700 0 0 1 8 0" />
          <circle cx="10.500" cy="14" r="1.700" fill="#fff" stroke="none" />
        </svg>
        <svg className="ml-[9px]" width="21" height="16" viewBox="0 0 21 16" fill="none" stroke="#fff" strokeWidth="1.400">
          <path d="M1 5.500h3L8.500 1.500v13L4 10.500H1z" strokeLinejoin="round" />
          <path d="M11 5.500q2 2.500 0 5" />
          <path d="M14 3.500q3.500 4.500 0 9M17 1.500q5 6.500 0 13" strokeOpacity=".4" />
        </svg>
        <svg className="ml-[10px]" width="21" height="17" viewBox="0 0 21 17">
          <path d="M8 3h9q2 0 2 2v9q0 2-2 2H7q-2 0-2-2v-2" fill="none" stroke="#fff" strokeWidth="1.300" />
          <path d="M8.500 5h8.500v9H7v-4q1.500-1 1.500-2zM19.500 7H21v4h-1.500z" fill="#fff" />
          <path d="M0 3h7v3q0 2.500-2.800 2.700V12H2.800V8.700Q0 8.500 0 6zM1.200 0h1.300v3H1.200zM4.500 0h1.300v3H4.500z" fill="#fff" />
        </svg>
        <div className="-mt-[2px] ml-auto text-right text-[14.500px] leading-5 tracking-[-0.2px] whitespace-nowrap">
          8:36 p. m.
          <br />
          6/11/2022
        </div>
        <div className="mr-[25px] ml-[9px] flex size-5 items-center justify-center rounded-full bg-[#4cc2ff] text-[13px] leading-none text-[#10222e]">6</div>
      </div>
    </div>
  );
}

export default function App() {
  return (
    <div className="relative flex h-[1080px] w-[1920px] flex-col overflow-hidden bg-[#0e1117]">
      <div className="flex h-[1020px]">
        <SideRail />
        <div className="flex min-w-0 flex-1 flex-col">
          <TabStrip />
          <div className="h-[87px] border-b border-[#14161b] bg-[#3b4651]">
            <AddressBar />
            <Bookmarks />
          </div>
          <div className="flex min-h-0 flex-1">
            <Sidebar />
            <Main />
          </div>
        </div>
      </div>
      <Taskbar />
      <Notification />
    </div>
  );
}
